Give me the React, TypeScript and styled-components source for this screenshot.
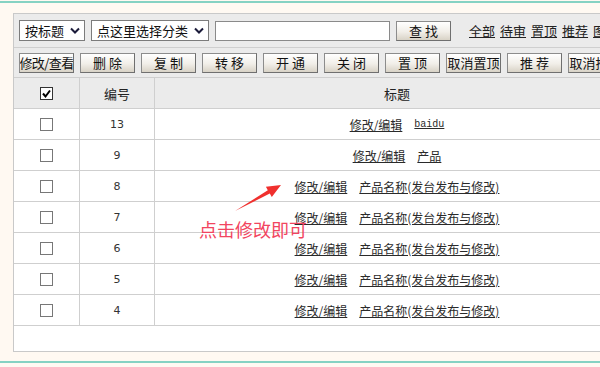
import styled, { createGlobalStyle } from "styled-components";

const GlobalStyle = createGlobalStyle`
  body {
    margin: 0;
    background: #fff9f2;
    overflow: hidden;
    font-family: "Noto Sans CJK SC", "Noto Sans", sans-serif;
    color: #222;
  }
`;

const Page = styled.div`
  position: relative;
  width: 600px;
  height: 367px;
  padding-top: 1px;
  box-sizing: border-box;
  overflow: hidden;
`;

const TealLine = styled.div<{ $gap?: number }>`
  height: 2px;
  background: #86d2c3;
  margin-top: ${(p) => p.$gap ?? 0}px;
`;

const Panel = styled.div`
  margin: 10px 0 0 13px;
  width: 626px;
  height: 339px;
  box-sizing: border-box;
  border: 1px solid #c9c9c9;
  border-right: none;
  background: #fff;
  display: flex;
  flex-direction: column;
`;

const Toolbar = styled.div<{ $h: number }>`
  height: ${(p) => p.$h}px;
  background: #ebebeb;
  border-bottom: 1px solid #cfcfcf;
  display: flex;
  align-items: center;
  gap: 6px;
  padding-left: 5px;
  flex-shrink: 0;
  font-size: 13px;
`;

const Select = styled.div<{ $w: number }>`
  width: ${(p) => p.$w}px;
  height: 21px;
  box-sizing: border-box;
  border: 1px solid #7c7c7c;
  background: #fff;
  display: flex;
  align-items: center;
  justify-content: space-between;
  padding: 0 4px 0 5px;
  font-size: 13px;
  color: #111;
  white-space: nowrap;
`;

const SearchInput = styled.div`
  width: 175px;
  height: 20px;
  box-sizing: border-box;
  border: 1px solid #8a8a8a;
  background: #fff;
`;

const Button = styled.div<{ $tight?: boolean }>`
  width: 55px;
  height: 20px;
  box-sizing: border-box;
  border: 1px solid #8c8c8c;
  border-right-color: #6f6f6f;
  border-bottom-color: #6f6f6f;
  background: linear-gradient(#ffffff, #f1eee8 55%, #d8d2c6);
  display: flex;
  align-items: center;
  justify-content: center;
  font-size: 13px;
  color: #111;
  white-space: nowrap;
  overflow: hidden;
  letter-spacing: ${(p) => (p.$tight ? "-0.6px" : "0")};
  flex-shrink: 0;
`;

const Links = styled.div`
  display: flex;
  gap: 5px;
  margin-left: 12px;
  white-space: nowrap;
`;

const TopLink = styled.span`
  text-decoration: underline;
  color: #222;
`;

const Row = styled.div<{ $head?: boolean }>`
  display: grid;
  grid-template-columns: 66px 75px 1fr;
  height: ${(p) => (p.$head ? 30 : 30)}px;
  border-bottom: 1px solid #cfcfcf;
  background: ${(p) => (p.$head ? "#ebebeb" : "#fff")};
  flex-shrink: 0;
`;

const Cell = styled.div<{ $last?: boolean }>`
  display: flex;
  align-items: center;
  justify-content: center;
  gap: 12px;
  border-right: ${(p) => (p.$last ? "none" : "1px solid #cfcfcf")};
  font-size: 12px;
  color: #333;
`;

const HeadText = styled.span`
  font-size: 13px;
  color: #222;
`;

const Box = styled.div<{ $checked?: boolean }>`
  width: 13px;
  height: 13px;
  box-sizing: border-box;
  background: #fff;
  border: 1px solid ${(p) => (p.$checked ? "#333" : "#777")};
  display: flex;
  align-items: center;
  justify-content: center;
`;

const RowLink = styled.span<{ $mono?: boolean }>`
  text-decoration: underline;
  color: #2a2a2a;
  white-space: nowrap;
  font-family: ${(p) =>
    p.$mono ? '"Liberation Mono", monospace' : '"Noto Sans CJK SC", sans-serif'};
  font-size: ${(p) => (p.$mono ? "10px" : "12px")};
`;

const Num = styled.span`
  font-family: "DejaVu Sans", sans-serif;
  font-size: 11px;
  color: #333;
`;

const Note = styled.div`
  position: absolute;
  left: 199px;
  top: 216px;
  font-size: 18px;
  color: #f24560;
  white-space: nowrap;
`;

const Arrow = styled.svg`
  position: absolute;
  left: 230px;
  top: 180px;
`;

const Chevron = () => (
  <svg width="10" height="7" viewBox="0 0 10 7">
    <path d="M1 1.5 L5 5.5 L9 1.5" fill="none" stroke="#1b1b3a" strokeWidth="2" />
  </svg>
);

const Check = () => (
  <svg width="11" height="11" viewBox="0 0 11 11">
    <path d="M2 5.5 L4.5 8.5 L9 2.5" fill="none" stroke="#000" strokeWidth="2" />
  </svg>
);

const actions = ["删 除", "复 制", "转 移", "开 通", "关 闭", "置 顶", "取消置顶", "推 荐", "取消推荐"];

const rows = [
  { id: 13, title: "baidu", mono: true },
  { id: 9, title: "产品" },
  { id: 8, title: "产品名称(发台发布与修改)" },
  { id: 7, title: "产品名称(发台发布与修改)" },
  { id: 6, title: "产品名称(发台发布与修改)" },
  { id: 5, title: "产品名称(发台发布与修改)" },
  { id: 4, title: "产品名称(发台发布与修改)" },
];

export default function App() {
  return (
    <Page>
      <GlobalStyle />
      <TealLine />
      <Panel>
        <Toolbar $h={33}>
          <Select $w={66}>
            按标题 <Chevron />
          </Select>
          <Select $w={118}>
            点这里选择分类 <Chevron />
          </Select>
          <SearchInput />
          <Button>查 找</Button>
          <Links>
            <TopLink>全部</TopLink>
            <TopLink>待审</TopLink>
            <TopLink>置顶</TopLink>
            <TopLink>推荐</TopLink>
            <TopLink>图片</TopLink>
          </Links>
        </Toolbar>
        <Toolbar $h={29}>
          <Button $tight>修改/查看</Button>
          {actions.map((a) => (
            <Button key={a}>{a}</Button>
          ))}
        </Toolbar>
        <Row $head>
          <Cell>
            <Box $checked>
              <Check />
            </Box>
          </Cell>
          <Cell>
            <HeadText>编号</HeadText>
          </Cell>
          <Cell $last>
            <HeadText>标题</HeadText>
          </Cell>
        </Row>
        {rows.map((r) => (
          <Row key={r.id}>
            <Cell>
              <Box />
            </Cell>
            <Cell>
              <Num>{r.id}</Num>
            </Cell>
            <Cell $last>
              <RowLink>修改/编辑</RowLink>
              <RowLink $mono={r.mono}>{r.title}</RowLink>
            </Cell>
          </Row>
        ))}
      </Panel>
      <TealLine $gap={9} />
      <Arrow width="60" height="40" viewBox="230 180 60 40">
        <polygon
          points="235,211 269.8,193.6 271.8,197.1 281,185 265.9,186.7 267.8,190.2"
          fill="#f0302e"
        />
      </Arrow>
      <Note>点击修改即可</Note>
    </Page>
  );
}
